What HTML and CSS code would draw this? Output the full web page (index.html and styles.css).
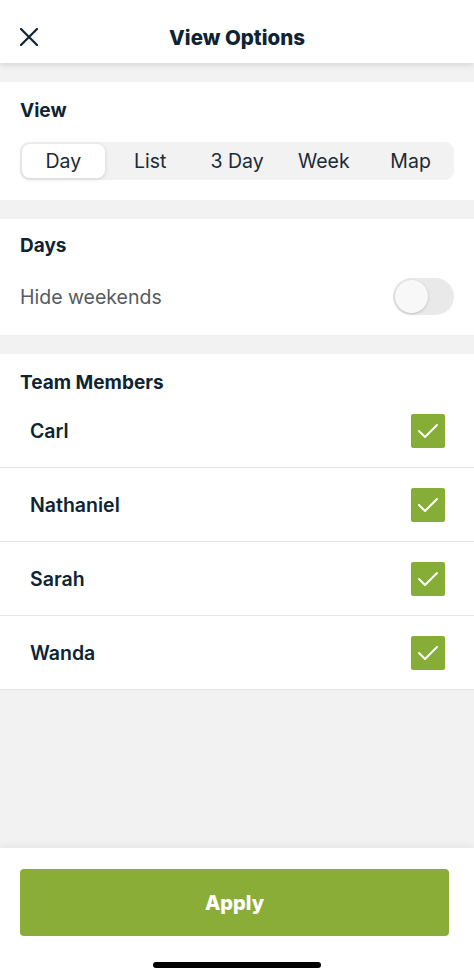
FILE: index.html
```html
<!DOCTYPE html>
<html lang="en">
<head>
    <meta charset="UTF-8">
    <meta name="viewport" content="width=device-width, initial-scale=1.0">
    <title>View Options</title>
    <link rel="stylesheet" href="styles.css">
</head>
<body>

<div class="screen">
    <div class="header">
        <span class="close">
            <svg width="18" height="18" viewBox="0 0 18 18"><path d="M1 1L17 17M17 1L1 17" stroke="#0e2433" stroke-width="2.2" stroke-linecap="round"/></svg>
        </span>
        <h1>View Options</h1>
    </div>

    <div class="section view-section">
        <h2>View</h2>
        <div class="segment">
            <span class="seg-item active">Day</span>
            <span class="seg-item">List</span>
            <span class="seg-item">3 Day</span>
            <span class="seg-item">Week</span>
            <span class="seg-item">Map</span>
        </div>
    </div>

    <div class="section days-section">
        <h2>Days</h2>
        <div class="toggle-row">
            <span class="toggle-label">Hide weekends</span>
            <span class="toggle"><span class="knob"></span></span>
        </div>
    </div>

    <div class="section team-section">
        <h2>Team Members</h2>
        <div class="member">
            <span class="name">Carl</span>
            <span class="check"><svg width="22" height="16" viewBox="0 0 22 16"><path d="M2 8L8 14L20 2" fill="none" stroke="#fff" stroke-width="2" stroke-linecap="round" stroke-linejoin="round"/></svg></span>
        </div>
        <div class="member">
            <span class="name">Nathaniel</span>
            <span class="check"><svg width="22" height="16" viewBox="0 0 22 16"><path d="M2 8L8 14L20 2" fill="none" stroke="#fff" stroke-width="2" stroke-linecap="round" stroke-linejoin="round"/></svg></span>
        </div>
        <div class="member">
            <span class="name">Sarah</span>
            <span class="check"><svg width="22" height="16" viewBox="0 0 22 16"><path d="M2 8L8 14L20 2" fill="none" stroke="#fff" stroke-width="2" stroke-linecap="round" stroke-linejoin="round"/></svg></span>
        </div>
        <div class="member">
            <span class="name">Wanda</span>
            <span class="check"><svg width="22" height="16" viewBox="0 0 22 16"><path d="M2 8L8 14L20 2" fill="none" stroke="#fff" stroke-width="2" stroke-linecap="round" stroke-linejoin="round"/></svg></span>
        </div>
    </div>

    <div class="filler"></div>

    <div class="footer">
        <button class="apply">Apply</button>
        <div class="home-bar"></div>
    </div>
</div>

</body>
</html>
```

FILE: styles.css
```css
body {
    margin: 0;
    font-family: Inter, "Noto Sans", sans-serif;
    color: #0e2433;
    background: #f2f2f2;
}
.screen {
    width: 474px;
    height: 978px;
    display: flex;
    flex-direction: column;
    overflow: hidden;
}
.header {
    height: 63px;
    background: #fff;
    display: flex;
    align-items: center;
    justify-content: center;
    position: relative;
    box-shadow: 0 2px 6px rgba(0, 0, 0, 0.12);
    z-index: 1;
    flex-shrink: 0;
}
.header h1 {
    margin: 0;
    font-size: 20.5px;
    font-weight: 800;
    padding-top: 12px;
}
.close {
    position: absolute;
    left: 20px;
    top: 28px;
    width: 18px;
    height: 18px;
}
.section {
    background: #fff;
    margin-top: 19px;
    flex-shrink: 0;
}
.section h2 {
    margin: 0;
    font-size: 19px;
    font-weight: 700;
    line-height: 22px;
    padding-left: 20px;
}
.view-section {
    padding: 18px 0 20px;
}
.segment {
    margin: 20px 20px 0;
    height: 38px;
    box-sizing: border-box;
    padding: 2px;
    gap: 4px;
    background: #f2f2f2;
    border-radius: 9px;
    display: flex;
}
.seg-item {
    flex: 1;
    display: flex;
    align-items: center;
    justify-content: center;
    font-size: 19.5px;
    color: #1a2a36;
}
.seg-item.active {
    background: #fff;
    border-radius: 8px;
    box-shadow: 0 1px 4px rgba(0, 0, 0, 0.15);
}
.days-section {
    padding: 16px 0 20px;
}
.toggle-row {
    margin-top: 21px;
    padding: 0 20px;
    display: flex;
    align-items: center;
    justify-content: space-between;
}
.toggle-label {
    font-size: 19.5px;
    color: #555b60;
}
.toggle {
    width: 61px;
    height: 37px;
    border-radius: 19px;
    background: #e9e9e9;
    display: flex;
    align-items: center;
    padding: 2px;
    box-sizing: border-box;
}
.knob {
    width: 33px;
    height: 33px;
    border-radius: 50%;
    background: #f8f8f8;
    box-shadow: 0 1px 3px rgba(0, 0, 0, 0.18);
}
.team-section {
    padding-top: 18px;
}
.member {
    height: 74px;
    box-sizing: border-box;
    border-bottom: 1px solid #e4e4e4;
    display: flex;
    align-items: center;
    justify-content: space-between;
    padding: 0 29px 0 30px;
}
.name {
    font-size: 19.5px;
    font-weight: 600;
}
.check {
    width: 34px;
    height: 34px;
    border-radius: 2px;
    background: #86ad36;
    display: flex;
    align-items: center;
    justify-content: center;
}
.filler {
    flex: 1;
    background: #f2f2f2;
}
.footer {
    height: 130px;
    background: #fff;
    flex-shrink: 0;
    box-shadow: 0 -2px 8px rgba(0, 0, 0, 0.06);
    padding-top: 21px;
    box-sizing: border-box;
}
.apply {
    display: block;
    margin-left: 20px;
    width: 429px;
    height: 67px;
    border: none;
    border-radius: 4px;
    background: #8aad37;
    color: #fff;
    font-family: Inter, "Noto Sans", sans-serif;
    font-size: 20px;
    font-weight: 800;
}
.home-bar {
    width: 168px;
    height: 6px;
    border-radius: 3px;
    background: #000;
    margin: 26px auto 0;
}
```
